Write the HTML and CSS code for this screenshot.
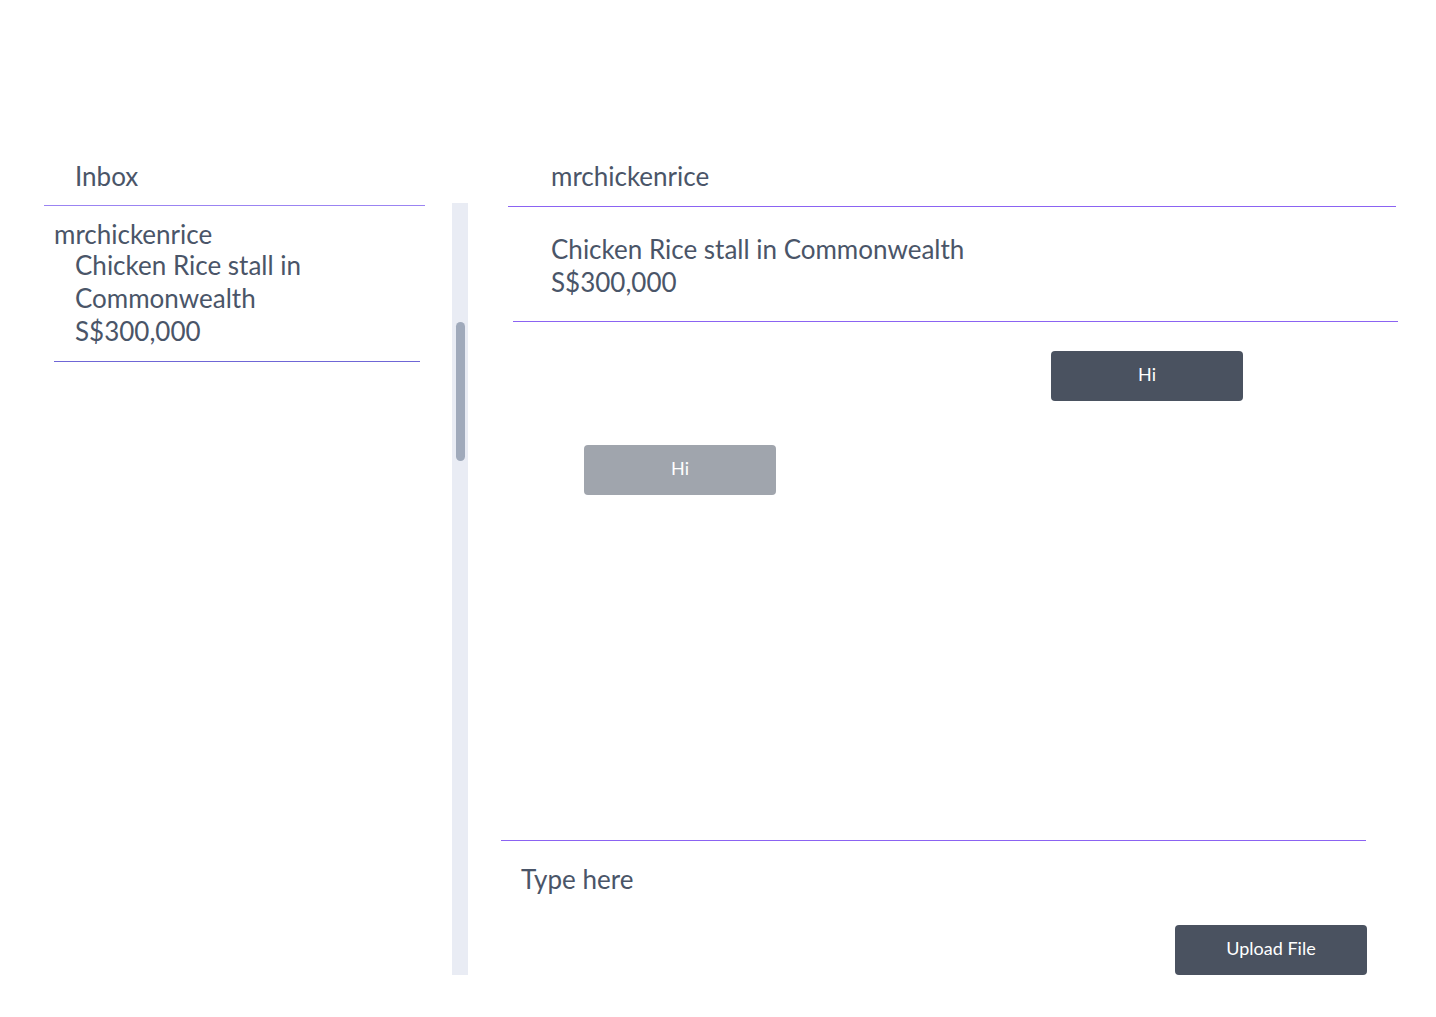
FILE: index.html
```html
<!DOCTYPE html>
<html lang="en">
<head>
<meta charset="utf-8">
<title>Inbox</title>
<link rel="stylesheet" href="styles.css">
</head>
<body>
<div class="page">
  <aside class="inbox">
    <div class="inbox-title">Inbox</div>
    <div class="rule rule-inbox"></div>
    <div class="thread">
      <div class="thread-user">mrchickenrice</div>
      <div class="thread-detail">Chicken Rice stall in<br>Commonwealth<br>S$300,000</div>
    </div>
    <div class="rule rule-thread"></div>
  </aside>
  <div class="scrollbar"><div class="scroll-thumb"></div></div>
  <main class="chat">
    <div class="chat-title">mrchickenrice</div>
    <div class="rule rule-title"></div>
    <div class="listing">Chicken Rice stall in Commonwealth<br>S$300,000</div>
    <div class="rule rule-listing"></div>
    <div class="bubble bubble-out">Hi</div>
    <div class="bubble bubble-in">Hi</div>
    <div class="composer">
      <div class="rule rule-composer"></div>
      <div class="type-here">Type here</div>
      <button class="upload">Upload File</button>
    </div>
  </main>
</div>
</body>
</html>
```

FILE: styles.css
```css
html, body {
  margin: 0;
  padding: 0;
  background: #ffffff;
}
body {
  font-family: Lato, "Open Sans", "Liberation Sans", sans-serif;
  color: #4a5568;
}
.page {
  display: flex;
  align-items: flex-start;
  padding: 160px 0 0 44px;
}
.inbox {
  width: 381px;
  display: flex;
  flex-direction: column;
}
.inbox-title {
  font-size: 26px;
  line-height: 33px;
  padding-left: 31px;
}
.rule {
  height: 1px;
  background: #8b63f2;
}
.rule-inbox {
  margin-top: 12px;
  width: 381px;
  background: #9b84f2;
}
.thread {
  margin-top: 12px;
  padding-left: 10px;
}
.thread-user {
  font-size: 26px;
  line-height: 32px;
}
.thread-detail {
  font-size: 26px;
  line-height: 33px;
  padding-left: 21px;
  margin-top: -1px;
}
.rule-thread {
  margin-top: 13px;
  margin-left: 10px;
  width: 366px;
  background: #6f66d6;
}
.scrollbar {
  margin-left: 27px;
  margin-top: 43px;
  width: 16px;
  height: 772px;
  background: #e9ecf4;
  display: flex;
  justify-content: center;
}
.scroll-thumb {
  margin-top: 119px;
  width: 9px;
  height: 139px;
  border-radius: 5px;
  background: #a0aabb;
}
.chat {
  margin-left: 33px;
  width: 897px;
  height: 815px;
  display: flex;
  flex-direction: column;
  align-items: flex-start;
}
.chat-title {
  font-size: 26px;
  line-height: 33px;
  padding-left: 50px;
}
.rule-title {
  margin-top: 13px;
  margin-left: 7px;
  width: 888px;
}
.listing {
  margin-top: 26px;
  padding-left: 50px;
  font-size: 26px;
  line-height: 33px;
}
.rule-listing {
  margin-top: 22px;
  margin-left: 12px;
  width: 885px;
}
.bubble {
  width: 192px;
  height: 50px;
  border-radius: 4px;
  color: #ffffff;
  font-size: 18px;
  line-height: 46px;
  text-align: center;
}
.bubble-out {
  margin-top: 29px;
  margin-left: 550px;
  background: #4a5260;
}
.bubble-in {
  margin-top: 44px;
  margin-left: 83px;
  background: #a0a5ad;
}
.composer {
  margin-top: auto;
  width: 100%;
  display: flex;
  flex-direction: column;
  align-items: flex-start;
}
.rule-composer {
  width: 865px;
}
.type-here {
  margin-top: 22px;
  padding-left: 20px;
  font-size: 26px;
  line-height: 33px;
}
.upload {
  margin-top: 29px;
  margin-left: 674px;
  width: 192px;
  height: 50px;
  border: none;
  border-radius: 4px;
  background: #4a5260;
  color: #ffffff;
  font-family: inherit;
  font-size: 18px;
  line-height: 46px;
  padding: 0 0 4px 0;
}
```
